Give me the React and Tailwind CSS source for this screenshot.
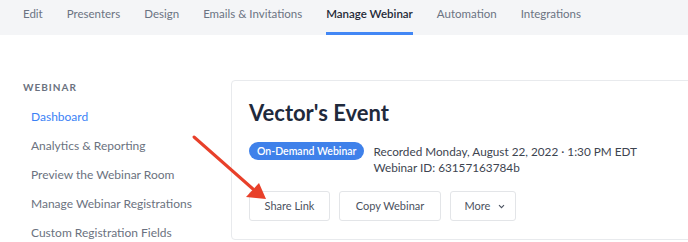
import React from 'react';

const tabs = ['Edit', 'Presenters', 'Design', 'Emails & Invitations', 'Manage Webinar', 'Automation', 'Integrations'];
const sideLinks = ['Dashboard', 'Analytics & Reporting', 'Preview the Webinar Room', 'Manage Webinar Registrations', 'Custom Registration Fields'];

const App = () => {
    return (
        <div className="relative w-[688px] h-[242px] overflow-hidden bg-white font-['Lato',sans-serif]">
            {/* Top tabs */}
            <nav className="flex h-[35px] bg-[#f4f5f7] pl-[23px] gap-[24px]">
                {tabs.map((tab) => (
                    <div
                        key={tab}
                        className={`flex items-center h-full whitespace-nowrap text-[11.5px] border-b-[3px] pb-[4px] ${tab === 'Manage Webinar' ? 'border-[#4287f5] text-[#1f2937] font-semibold' : 'border-transparent text-[#6b7382]'}`}
                    >
                        {tab}
                    </div>
                ))}
            </nav>

            <div className="flex pt-[45px]">
                {/* Sidebar */}
                <aside className="w-[231px] shrink-0 pl-[23px]">
                    <p className="text-[10px] font-bold tracking-[0.1em] text-[#6b7280] leading-[14px]">WEBINAR</p>
                    <ul className="mt-[14px] pl-[8px] flex flex-col gap-[12px]">
                        {sideLinks.map((link, i) => (
                            <li key={link} className={`whitespace-nowrap text-[12px] leading-[17px] ${i === 0 ? 'text-[#3b82f6]' : 'text-[#6b7280]'}`}>
                                {link}
                            </li>
                        ))}
                    </ul>
                </aside>

                {/* Event card */}
                <section className="shrink-0 w-[480px] h-[160px] border border-[#e8eaed] rounded-[4px] pl-[17px] pt-[17px]">
                    <h1 className="text-[22px] font-bold text-[#1f2a3c] leading-[30px]">Vector's Event</h1>
                    <div className="flex mt-[14px]">
                        <span className="whitespace-nowrap h-[18px] px-[8px] rounded-full bg-[#3f81ea] text-white text-[10.5px] leading-[18px] font-semibold">On-Demand Webinar</span>
                        <div className="ml-[9px] whitespace-nowrap text-[11.75px] leading-[16px] text-[#3d4450] mt-[2px]">
                            <p>Recorded Monday, August 22, 2022 · 1:30 PM EDT</p>
                            <p>Webinar ID: 63157163784b</p>
                        </div>
                    </div>
                    <div className="flex gap-[9px] mt-[15px]">
                        <button className="h-[30px] w-[81px] border border-[#e3e5e8] rounded-[3px] text-[11px] text-[#4b5260]">Share Link</button>
                        <button className="h-[30px] w-[102px] border border-[#e3e5e8] rounded-[3px] text-[11px] text-[#4b5260]">Copy Webinar</button>
                        <button className="h-[30px] w-[66px] border border-[#e3e5e8] rounded-[3px] text-[11px] text-[#4b5260] flex items-center justify-center gap-[8px] pl-[4px]">
                            More
                            <svg width="7" height="5" viewBox="0 0 7 5" fill="none">
                                <path d="M1 1.2l2.5 2.5 2.5-2.5" stroke="#4b5260" strokeWidth="1.1" />
                            </svg>
                        </button>
                    </div>
                </section>
            </div>

            {/* Red annotation arrow */}
            <svg className="absolute left-0 top-0" width="688" height="242" viewBox="0 0 688 242">
                <line x1="194" y1="137" x2="253" y2="189" stroke="#e8402a" strokeWidth="3" strokeLinecap="round" />
                <polygon points="266,199 246,197 259,183" fill="#e8402a" />
            </svg>
        </div>
    );
};

export default App;
